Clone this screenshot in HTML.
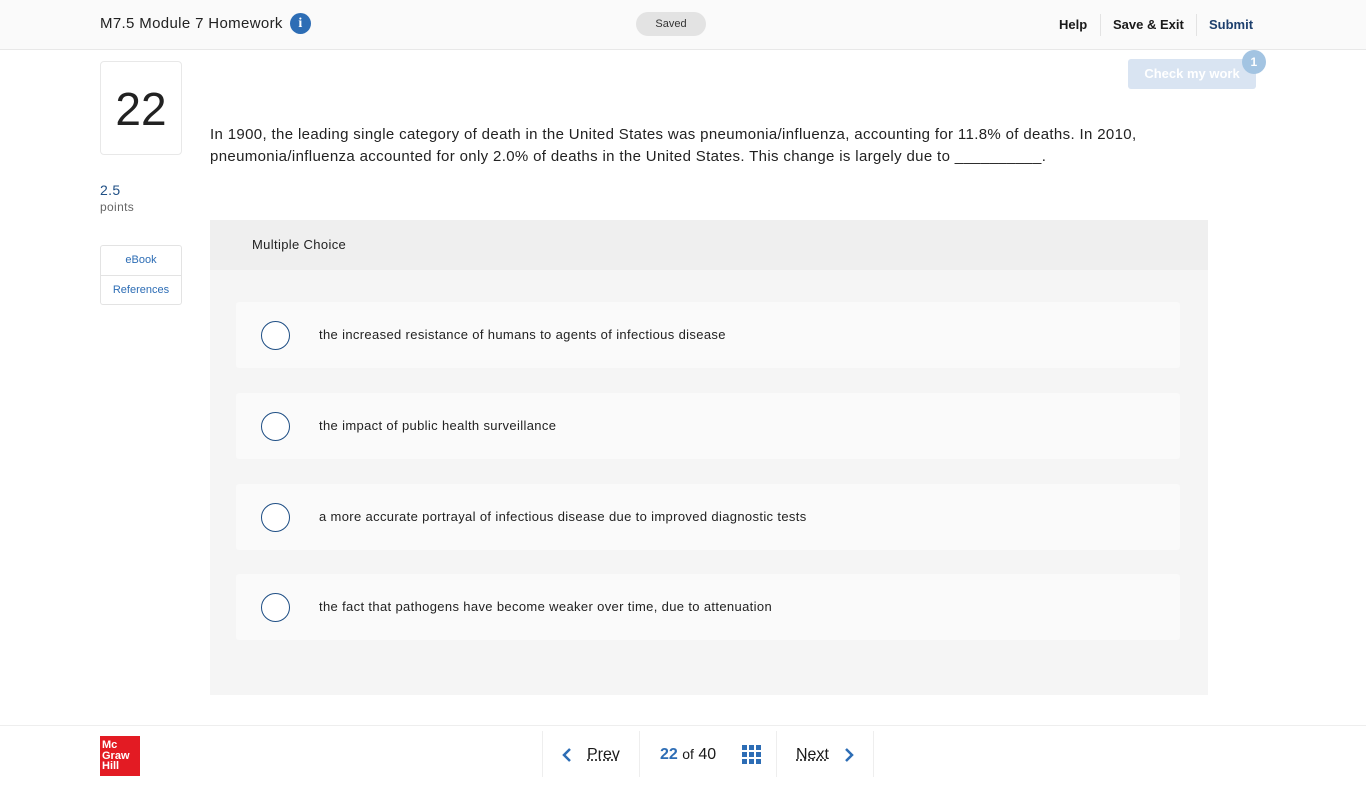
<!DOCTYPE html>
<html><head><style>
*{margin:0;padding:0;box-sizing:border-box}
body{width:1366px;height:785px;background:#fff;font-family:"Liberation Sans",sans-serif;color:#1a1a1a;position:relative;overflow:hidden;letter-spacing:0.35px}
.hdr{position:absolute;left:0;top:0;width:1366px;height:50px;background:#fafafa;border-bottom:1px solid #e8e8e8}
.abs{position:absolute}
.opt{position:absolute;left:236px;width:944px;height:66px;background:#fafafa;border-radius:3px}
.opt .c{position:absolute;left:25px;top:19px;width:29px;height:29px;border:1.5px solid #1f4f85;border-radius:50%;background:#fff}
.opt span{position:absolute;left:83px;top:25px;font-size:13px;color:#222}
</style></head><body>
<div class="hdr">
<div class="abs" style="left:100px;top:15px;font-size:15px;color:#222">M7.5 Module 7 Homework</div>
<div class="abs" style="left:290px;top:13px;width:21px;height:21px;border-radius:50%;background:#2d6db5;color:#fff;font:bold 14px 'Liberation Serif',serif;text-align:center;line-height:21px">i</div>
<div class="abs" style="left:636px;top:12px;width:70px;height:24px;border-radius:12px;background:#e3e3e3;font-size:11px;text-align:center;line-height:24px;color:#333;letter-spacing:0">Saved</div>
<div class="abs" style="left:1059px;top:17px;font-size:13px;font-weight:bold;letter-spacing:0">Help</div>
<div class="abs" style="left:1100px;top:14px;width:1px;height:22px;background:#e3e3e3"></div>
<div class="abs" style="left:1113px;top:17px;font-size:13px;font-weight:bold;letter-spacing:0">Save &amp; Exit</div>
<div class="abs" style="left:1196px;top:14px;width:1px;height:22px;background:#e3e3e3"></div>
<div class="abs" style="left:1209px;top:17px;font-size:13px;font-weight:bold;color:#1d3f6d;letter-spacing:0">Submit</div>
</div>
<div class="abs" style="left:1128px;top:59px;width:128px;height:30px;background:#d9e4f2;border-radius:3px;color:#fff;font-weight:bold;font-size:13px;text-align:center;line-height:30px;letter-spacing:0">Check my work</div>
<div class="abs" style="left:1242px;top:50px;width:24px;height:24px;border-radius:50%;background:#a3c4e2;color:#fff;font-size:12px;text-align:center;line-height:24px;font-weight:bold">1</div>
<div class="abs" style="left:100px;top:61px;width:82px;height:94px;border:1px solid #e8e8e8;border-radius:4px;font-size:46px;text-align:center;line-height:94px;color:#222;letter-spacing:0">22</div>
<div class="abs" style="left:100px;top:182px;font-size:14px;color:#1f4f85">2.5</div>
<div class="abs" style="left:100px;top:200px;font-size:12px;color:#666">points</div>
<div class="abs" style="left:100px;top:245px;width:82px;height:60px;border:1px solid #e3e3e3;border-radius:3px;letter-spacing:0">
<div style="height:30px;border-bottom:1px solid #e3e3e3;font-size:11px;color:#2d6db5;text-align:center;line-height:29px">eBook</div>
<div style="font-size:11px;color:#2d6db5;text-align:center;line-height:29px">References</div></div>
<div class="abs" style="left:210px;top:124px;width:960px;font-size:15px;line-height:22px;color:#222">In 1900, the leading single category of death in the United States was pneumonia/influenza, accounting for 11.8% of deaths. In 2010, pneumonia/influenza accounted for only 2.0% of deaths in the United States. This change is largely due to __________.</div>
<div class="abs" style="left:210px;top:220px;width:998px;height:475px;background:#f5f5f5">
<div style="height:50px;background:#efefef;font-size:13px;line-height:50px;padding-left:42px;color:#222">Multiple Choice</div></div>
<div class="opt" style="top:302px"><div class="c"></div><span>the increased resistance of humans to agents of infectious disease</span></div>
<div class="opt" style="top:393px"><div class="c"></div><span>the impact of public health surveillance</span></div>
<div class="opt" style="top:484px"><div class="c"></div><span>a more accurate portrayal of infectious disease due to improved diagnostic tests</span></div>
<div class="opt" style="top:574px"><div class="c"></div><span>the fact that pathogens have become weaker over time, due to attenuation</span></div>
<div class="abs" style="left:0;top:725px;width:1366px;height:1px;background:#eee"></div>
<div class="abs" style="left:100px;top:736px;width:40px;height:40px;background:#e31b23;color:#fff;font-weight:bold;font-size:11px;line-height:10.5px;padding:4px 2px;letter-spacing:0">Mc<br>Graw<br>Hill</div>
<div class="abs" style="left:542px;top:731px;width:1px;height:46px;background:#eee"></div>
<div class="abs" style="left:639px;top:731px;width:1px;height:46px;background:#eee"></div>
<div class="abs" style="left:776px;top:731px;width:1px;height:46px;background:#eee"></div>
<div class="abs" style="left:873px;top:731px;width:1px;height:46px;background:#eee"></div>
<svg class="abs" style="left:562px;top:747px" width="10" height="16"><path d="M8 2L2 8l6 6" stroke="#2d6db5" stroke-width="2.5" fill="none"/></svg>
<div class="abs" style="left:587px;top:746px;font-size:16px;text-decoration:underline dotted;letter-spacing:0">Prev</div>
<div class="abs" style="left:660px;top:746px;font-size:16px;letter-spacing:0"><b style="color:#2d6db5">22</b> <span style="font-size:14px">of</span> 40</div>
<svg class="abs" style="left:742px;top:745px" width="19" height="19" fill="#2d6db5"><rect x="0" y="0" width="5" height="5"/><rect x="7" y="0" width="5" height="5"/><rect x="14" y="0" width="5" height="5"/><rect x="0" y="7" width="5" height="5"/><rect x="7" y="7" width="5" height="5"/><rect x="14" y="7" width="5" height="5"/><rect x="0" y="14" width="5" height="5"/><rect x="7" y="14" width="5" height="5"/><rect x="14" y="14" width="5" height="5"/></svg>
<div class="abs" style="left:796px;top:746px;font-size:16px;text-decoration:underline dotted;letter-spacing:0">Next</div>
<svg class="abs" style="left:844px;top:747px" width="10" height="16"><path d="M2 2l6 6-6 6" stroke="#2d6db5" stroke-width="2.5" fill="none"/></svg>
</body></html>
